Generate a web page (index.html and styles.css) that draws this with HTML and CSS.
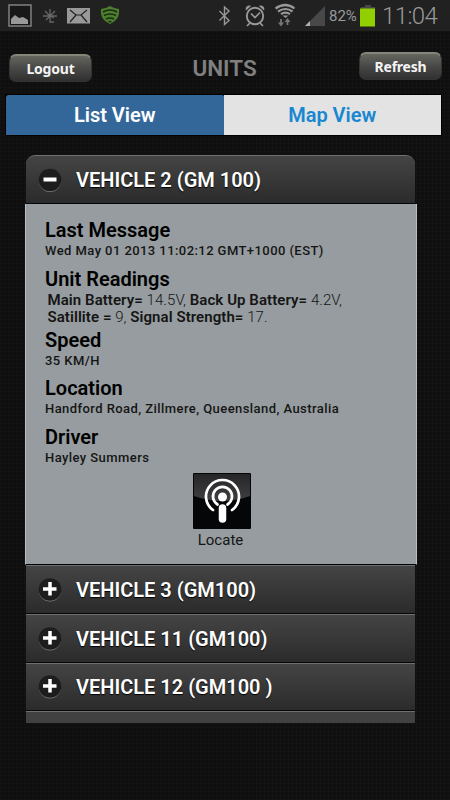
FILE: index.html
```html
<!DOCTYPE html>
<html lang="en">
<head>
    <meta charset="UTF-8">
    <meta name="viewport" content="width=device-width, initial-scale=1.0">
    <title>Units</title>
    <link rel="stylesheet" href="styles.css">
</head>
<body>
    <div class="status-bar">
        <svg class="status-icons" width="130" height="31" viewBox="0 0 130 31">
            <rect x="9" y="5" width="22" height="21" fill="#181818" stroke="#808080" stroke-width="1.5"/>
            <path d="M11 24v-5l4-4 4 3 4-1 5 3v4z" fill="#999"/>
            <path d="M50 9v13h4M43 16h14M45 11l5 5 5-5M46 20l4-4 4 2" fill="none" stroke="#666" stroke-width="1.3"/>
            <rect x="67" y="8" width="23" height="15.500" fill="#999"/>
            <path d="M70 10l6 5h5l6-5M70 22l6-7M87 22l-6-7" fill="none" stroke="#222" stroke-width="1.2"/>
            <path d="M110 6q5 3 9 3c1 8-3 12-9 15-6-3-10-7-9-15q4 0 9-3z" fill="#4c7f2d"/>
            <path d="M103 12q7-4 14 0M104 15.500q6-3 12 0M106 19q4-2 8 0M108.500 21.800q1.500-.8 3 0" fill="none" stroke="#1b2b14" stroke-width="1.5"/>
        </svg>
        <svg class="status-icons" width="111" height="31" viewBox="215 0 111 31">
            <path d="M219.500 11l9.500 9.500-4.500 4V7l4.500 4-9.500 9.500" fill="none" stroke="#999" stroke-width="1.400"/>
            <circle cx="255" cy="16" r="8.200" fill="none" stroke="#999" stroke-width="1.900"/>
            <path d="M251 13.500l4 4 5-5M250 23l-3 3M260 23l3 3" fill="none" stroke="#999" stroke-width="1.700"/>
            <path d="M246 10.500c-1.500-3 2-6 5-4.500zM264 10.500c1.500-3-2-6-5-4.500z" fill="#999"/>
            <path d="M275.500 8.500q10-7 19 0M278 11.500q7.500-5 14.500 0M281 14.200q4.500-3 9 0" fill="none" stroke="#999" stroke-width="2.200"/>
            <path d="M282.500 15.500h6l-3 2.500z" fill="#999"/>
            <path d="M281 19v5M287.500 25v-5" stroke="#777" stroke-width="1.800"/>
            <path d="M278 22.500h6l-3 4zM284.500 22h6l-3-4z" fill="#777"/>
            <path d="M305 26l20-20v20z" fill="#484848"/>
            <path d="M305 26l5-5v5z" fill="#b0b0b0"/>
        </svg>
        <span class="percent">82%</span>
        <svg class="battery" width="16" height="31" viewBox="0 0 16 31">
            <path d="M5 5h6v2h4v2H1V7h4z" fill="#484848"/>
            <rect x="0" y="8.500" width="15" height="18" fill="#92cf00"/>
        </svg>
        <span class="clock">11:04</span>
    </div>

    <div class="header">
        <button class="btn btn-logout">Logout</button>
        <h1>UNITS</h1>
        <button class="btn">Refresh</button>
    </div>

    <div class="tabs">
        <a class="tab active">List View</a>
        <a class="tab">Map View</a>
    </div>

    <div class="accordion">
        <div class="row first">
            <svg class="toggle" width="26" height="26" viewBox="0 0 26 26">
                <circle cx="13" cy="14" r="11" fill="#808080"/>
                <circle cx="13" cy="13" r="11.300" fill="#1d1d1d"/>
                <path d="M6.500 12.500h13" stroke="#fff" stroke-width="4"/>
            </svg>
            <span class="name">VEHICLE 2 (GM 100)</span>
        </div>

        <div class="details">
            <h2>Last Message</h2>
            <p class="small">Wed May 01 2013 11:02:12 GMT+1000 (EST)</p>
            <h2>Unit Readings</h2>
            <p class="readings"><b>Main Battery=</b> 14.5V, <b>Back Up Battery=</b> 4.2V,<br><b>Satillite =</b> 9, <b>Signal Strength=</b> 17.</p>
            <h2>Speed</h2>
            <p class="small">35 KM/H</p>
            <h2>Location</h2>
            <p class="small">Handford Road, Zillmere, Queensland, Australia</p>
            <h2>Driver</h2>
            <p class="small">Hayley Summers</p>
            <div class="locate">
                <svg width="58" height="56" viewBox="0 0 58 56">
                    <defs>
                        <linearGradient id="gloss" x1="0" y1="0" x2="0" y2="1">
                            <stop offset="0" stop-color="#262628"/>
                            <stop offset="1" stop-color="#3f3f41"/>
                        </linearGradient>
                    </defs>
                    <rect width="58" height="56" rx="1" fill="#050607"/>
                    <path d="M1 1h56v22q-28 10-56 0z" fill="url(#gloss)"/>
                    <g fill="none" stroke="#fff" stroke-linecap="round">
                        <path d="M20 37A16.500 16.500 0 1 1 39 37" stroke-width="2.700"/>
                        <path d="M24.500 31.500A9.500 9.500 0 1 1 34.500 31.500" stroke-width="2.700"/>
                        <path d="M29.500 35v11" stroke-width="7.500"/>
                    </g>
                    <circle cx="29.500" cy="24" r="4.500" fill="#fff"/>
                </svg>
                <span>Locate</span>
            </div>
        </div>

        <div class="row">
            <svg class="toggle" width="26" height="26" viewBox="0 0 26 26">
                <circle cx="13" cy="13.500" r="11" fill="#808080"/>
                <circle cx="13" cy="12.500" r="11.300" fill="#1d1d1d"/>
                <path d="M6 12h13.500M13 5v13.500" stroke="#fff" stroke-width="3.500"/>
            </svg>
            <span class="name">VEHICLE 3 (GM100)</span>
        </div>
        <div class="row">
            <svg class="toggle" width="26" height="26" viewBox="0 0 26 26">
                <circle cx="13" cy="13.500" r="11" fill="#808080"/>
                <circle cx="13" cy="12.500" r="11.300" fill="#1d1d1d"/>
                <path d="M6 12h13.500M13 5v13.500" stroke="#fff" stroke-width="3.500"/>
            </svg>
            <span class="name">VEHICLE 11 (GM100)</span>
        </div>
        <div class="row">
            <svg class="toggle" width="26" height="26" viewBox="0 0 26 26">
                <circle cx="13" cy="13.500" r="11" fill="#808080"/>
                <circle cx="13" cy="12.500" r="11.300" fill="#1d1d1d"/>
                <path d="M6 12h13.500M13 5v13.500" stroke="#fff" stroke-width="3.500"/>
            </svg>
            <span class="name">VEHICLE 12 (GM100 )</span>
        </div>
        <div class="row cut"></div>
    </div>
</body>
</html>
```
FILE: styles.css
```css
* {
    box-sizing: border-box;
}

body {
    margin: 0;
    height: 800px;
    overflow: hidden;
    font-family: Roboto, "Liberation Sans", sans-serif;
    background-color: #0f0f0f;
    background-image:
        repeating-linear-gradient(90deg, rgba(255, 255, 255, 0.01) 0 1px, transparent 1px 4px),
        repeating-linear-gradient(0deg, rgba(255, 255, 255, 0.01) 0 1px, transparent 1px 4px);
}

.status-bar {
    display: flex;
    align-items: center;
    height: 31px;
    background: #212121;
    color: #999;
}

.status-icons + .status-icons {
    margin-left: 85px;
}

.percent {
    width: 34px;
    padding-left: 3px;
    font-size: 15px;
    white-space: nowrap;
}

.clock {
    margin-left: 6px;
    font-size: 24px;
    font-weight: 350;
    letter-spacing: -0.6px;
}

.header {
    display: flex;
    justify-content: space-between;
    align-items: flex-start;
    height: 64px;
    padding: 21px 8px 0 9px;
}

.header h1 {
    margin: 2px 2px 0 0;
    font-size: 22.5px;
    line-height: 28px;
    font-weight: 600;
    color: #808080;
}

.btn {
    width: 83px;
    height: 28px;
    padding: 0;
    border: 1px solid #343434;
    border-top: 2px solid #85857a;
    border-radius: 7px;
    background: linear-gradient(#66665f, #4a4a48 45%, #303030);
    color: #f4f4f4;
    font-family: "Noto Sans", sans-serif;
    font-size: 14px;
    line-height: 23px;
    font-weight: 700;
    letter-spacing: -0.2px;
}

.btn-logout {
    margin-top: 2px;
}

.tabs {
    display: flex;
    width: 435px;
    height: 40px;
    margin-left: 6px;
    outline: 1px solid #000;
}

.tab {
    flex: 1;
    background: #e3e3e3;
    color: #1886d0;
    font-size: 20px;
    font-weight: 600;
    line-height: 40px;
    text-align: center;
}

.tab.active {
    background: #33679a;
    color: #fff;
    border-radius: 3px 2px 0 0;
}

.accordion {
    width: 389px;
    margin: 20px 0 0 26px;
}

.row {
    display: flex;
    align-items: center;
    height: 48.75px;
    padding: 1px 0 0 11px;
    border-top: 1px solid #707070;
    border-bottom: 1px solid #050505;
    background: linear-gradient(#444, #2b2b2b);
}

.row.first {
    height: 49px;
    padding-top: 0;
    border-radius: 9px 9px 0 0;
}

.row.cut {
    height: 12px;
    border-bottom: 0;
    background: #414141;
}

.toggle {
    flex: none;
}

.name {
    margin-left: 13px;
    color: #fff;
    font-size: 20px;
    font-weight: 600;
    white-space: nowrap;
    text-shadow: 0 1px 1px #000;
}

.details {
    width: 392px;
    height: 361px;
    margin-left: -1px;
    padding: 14px 0 0 19px;
    border-left: 1px solid #b9bdbe;
    border-right: 1px solid #b9bdbe;
    border-bottom: 1px solid #000;
    background: #969c9f;
    color: #151515;
    white-space: nowrap;
}

.details h2 {
    margin: 0;
    font-size: 20px;
    line-height: 24px;
    font-weight: 600;
    color: #000;
}

.small {
    margin: 0;
    height: 24.5px;
    font-size: 13px;
    line-height: 18px;
    font-weight: 500;
    letter-spacing: 0.43px;
}

.readings {
    margin: 0 0 0 2.5px;
    padding: 1px 0 1.3px;
    font-size: 15px;
    line-height: 17.5px;
    font-weight: 300;
    letter-spacing: 0.07px;
}

.readings b {
    font-weight: 600;
}

.locate {
    display: flex;
    flex-direction: column;
    align-items: center;
    width: 118px;
    margin: 0 0 0 118px;
    font-size: 15px;
    line-height: 23px;
}

.locate span {
    margin-right: 3px;
}
```
